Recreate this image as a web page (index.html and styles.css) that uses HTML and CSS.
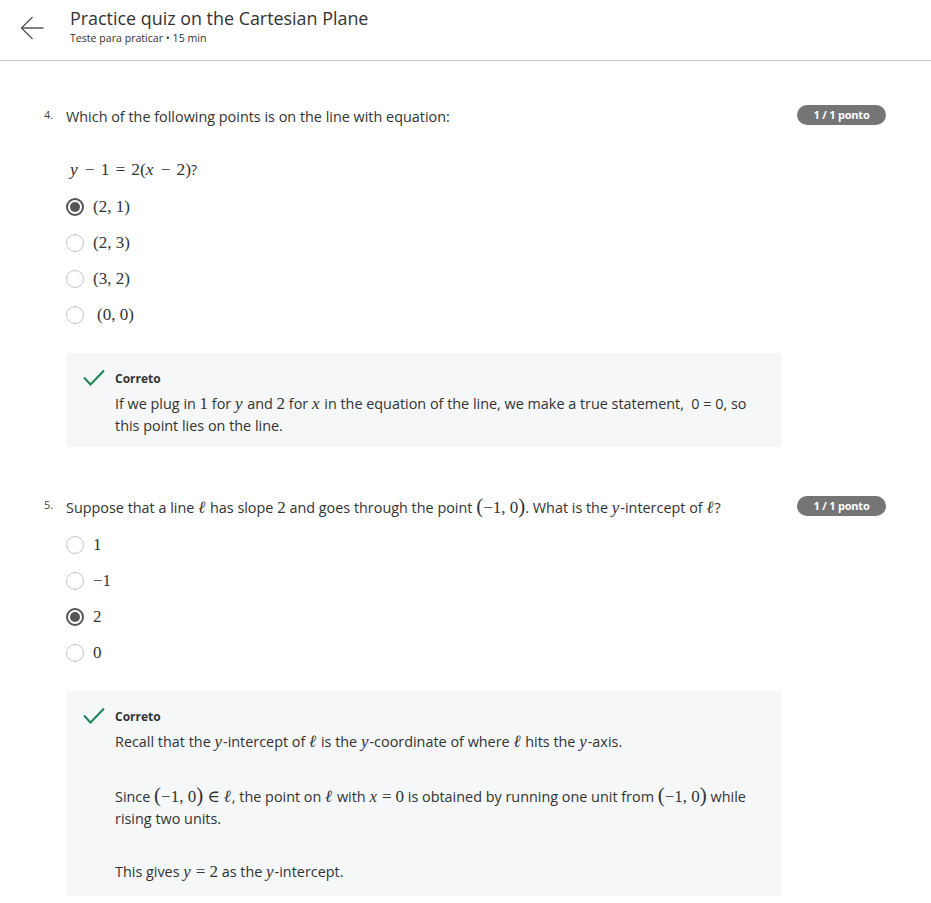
FILE: index.html
```html
<!DOCTYPE html>
<html lang="pt">
<head>
<meta charset="utf-8">
<title>Practice quiz on the Cartesian Plane</title>
<link rel="stylesheet" href="styles.css">
</head>
<body>
<header class="topbar">
  <svg class="back" width="24" height="24" viewBox="0 0 24 24" aria-hidden="true">
    <path d="M1.5 12 H23.5 M12.5 1 L1.5 12 L12.5 23" fill="none" stroke="#555" stroke-width="1.3"/>
  </svg>
  <div class="titles">
    <div class="title">Practice quiz on the Cartesian Plane</div>
    <div class="subtitle">Teste para praticar • 15 min</div>
  </div>
</header>

<main class="quiz">
  <section class="question q4">
    <div class="qrow">
      <span class="qnum">4.</span>
      <div class="qtext">Which of the following points is on the line with equation:</div>
      <span class="badge">1 / 1 ponto</span>
    </div>
    <div class="equation"><span class="m eq"><i>y</i><span class="op">−</span>1<span class="op">=</span>2(<i>x</i><span class="op">−</span>2)</span>?</div>
    <ul class="options">
      <li class="opt"><span class="radio checked"></span><span class="m">(2, 1)</span></li>
      <li class="opt"><span class="radio"></span><span class="m">(2, 3)</span></li>
      <li class="opt"><span class="radio"></span><span class="m">(3, 2)</span></li>
      <li class="opt"><span class="radio"></span><span class="m shift">(0, 0)</span></li>
    </ul>
    <div class="feedback">
      <div class="fb-head">
        <svg class="check" width="22" height="18" viewBox="0 0 22 18" aria-hidden="true">
          <path d="M1 8.5 L7.5 15.5 L21 1.5" fill="none" stroke="#1f8354" stroke-width="2"/>
        </svg>
        <span class="fb-label">Correto</span>
      </div>
      <div class="fb-body">
        <p>If we plug in <span class="m">1</span> for <span class="m"><i>y</i></span> and <span class="m">2</span> for <span class="m"><i>x</i></span> in the equation of the line, we make a true statement,&nbsp; 0 = 0, so this point lies on the line.</p>
      </div>
    </div>
  </section>

  <section class="question q5">
    <div class="qrow">
      <span class="qnum">5.</span>
      <div class="qtext">Suppose that a line <span class="m"><i>ℓ</i></span> has slope <span class="m">2</span> and goes through the point <span class="m"><span class="big">(</span>−1, 0<span class="big">)</span></span>. What is the <span class="m"><i>y</i></span>-intercept of <span class="m"><i>ℓ</i></span>?</div>
      <span class="badge">1 / 1 ponto</span>
    </div>
    <ul class="options">
      <li class="opt"><span class="radio"></span><span class="m">1</span></li>
      <li class="opt"><span class="radio"></span><span class="m">−1</span></li>
      <li class="opt"><span class="radio checked"></span><span class="m">2</span></li>
      <li class="opt"><span class="radio"></span><span class="m">0</span></li>
    </ul>
    <div class="feedback tall">
      <div class="fb-head">
        <svg class="check" width="22" height="18" viewBox="0 0 22 18" aria-hidden="true">
          <path d="M1 8.5 L7.5 15.5 L21 1.5" fill="none" stroke="#1f8354" stroke-width="2"/>
        </svg>
        <span class="fb-label">Correto</span>
      </div>
      <div class="fb-body">
        <p>Recall that the <span class="m"><i>y</i></span>-intercept of <span class="m"><i>ℓ</i></span> is the <span class="m"><i>y</i></span>-coordinate of where <span class="m"><i>ℓ</i></span> hits the <span class="m"><i>y</i></span>-axis.</p>
        <p>Since <span class="m"><span class="big">(</span>−1, 0<span class="big">)</span><span class="op">∈</span><i>ℓ</i></span>, the point on <span class="m"><i>ℓ</i></span> with <span class="m"><i>x</i><span class="op">=</span>0</span> is obtained by running one unit from <span class="m"><span class="big">(</span>−1, 0<span class="big">)</span></span> while rising two units.</p>
        <p>This gives <span class="m"><i>y</i><span class="op">=</span>2</span> as the <span class="m"><i>y</i></span>-intercept.</p>
      </div>
    </div>
  </section>
</main>
</body>
</html>
```

FILE: styles.css
```css
* { box-sizing: border-box; }

body {
  margin: 0;
  background: #fff;
  font-family: "Open Sans", "Liberation Sans", sans-serif;
  color: #373a3c;
}

.topbar {
  display: flex;
  align-items: flex-start;
  height: 61px;
  padding: 6px 0 0 20px;
  border-bottom: 1px solid #c8c8c8;
}

.back {
  margin-top: 10px;
  flex: none;
}

.titles {
  margin-left: 26px;
}

.title {
  font-size: 17.9px;
  line-height: 24px;
  color: #333;
}

.subtitle {
  font-size: 10.6px;
  line-height: 16px;
  color: #333;
}

.quiz {
  padding: 0 45px 0 44px;
}

.question.q4 { padding-top: 43px; }
.question.q5 { padding-top: 47px; }

.qrow {
  display: flex;
  align-items: center;
  height: 24px;
}

.qnum {
  width: 22px;
  flex: none;
  font-size: 11px;
  margin-top: -4px;
  color: #444;
}

.qtext {
  flex: 1;
  font-size: 14.4px;
  color: #333;
  white-space: nowrap;
}

.badge {
  flex: none;
  width: 89px;
  height: 20px;
  border-radius: 10px;
  background: #757575;
  color: #fff;
  font-size: 11px;
  font-weight: 700;
  line-height: 20px;
  text-align: center;
  letter-spacing: -0.2px;
}

.q4 .qrow .badge { margin-top: -2px; }

.m {
  font-family: "Liberation Serif", "DejaVu Serif", serif;
  font-size: 17px;
  color: #333;
}

.m i {
  font-style: italic;
  padding-right: 1px;
}

.op { margin: 0 4px; }

.eq { font-size: 17.5px; }

.eq .op { margin: 0 6px; }

.big { font-size: 21px; }

.equation {
  margin: 29px 0 0 26px;
  height: 24px;
  line-height: 24px;
  font-size: 14px;
  color: #333;
}

.options {
  list-style: none;
  margin: 8px 0 0 0;
  padding: 0 0 0 22px;
}

.q5 .options { margin-top: 9px; }

.opt {
  display: flex;
  align-items: center;
  height: 36px;
  gap: 9px;
}

.radio {
  flex: none;
  width: 18px;
  height: 18px;
  border: 1.5px solid #c4c4c4;
  border-radius: 50%;
  display: flex;
  align-items: center;
  justify-content: center;
}

.radio.checked {
  border: 2px solid #555;
}

.radio.checked::after {
  content: "";
  width: 10px;
  height: 10px;
  border-radius: 50%;
  background: #555;
}

.shift { margin-left: 4px; }

.feedback {
  margin: 20px 0 0 22px;
  width: 716px;
  background: #f5f7f8;
  padding: 13px 20px 10px 17px;
}

.feedback.tall { padding-bottom: 13px; }

.fb-head {
  display: flex;
  align-items: center;
  height: 24px;
}

.check { flex: none; }

.fb-label {
  margin-left: 10px;
  font-size: 12px;
  font-weight: 700;
  color: #333;
}

.fb-body {
  margin: 3px 0 0 32px;
}

.fb-body p {
  margin: 0 0 31px 0;
  font-size: 14.4px;
  line-height: 22px;
  color: #333;
}

.fb-body p:last-child { margin-bottom: 0; }
```
